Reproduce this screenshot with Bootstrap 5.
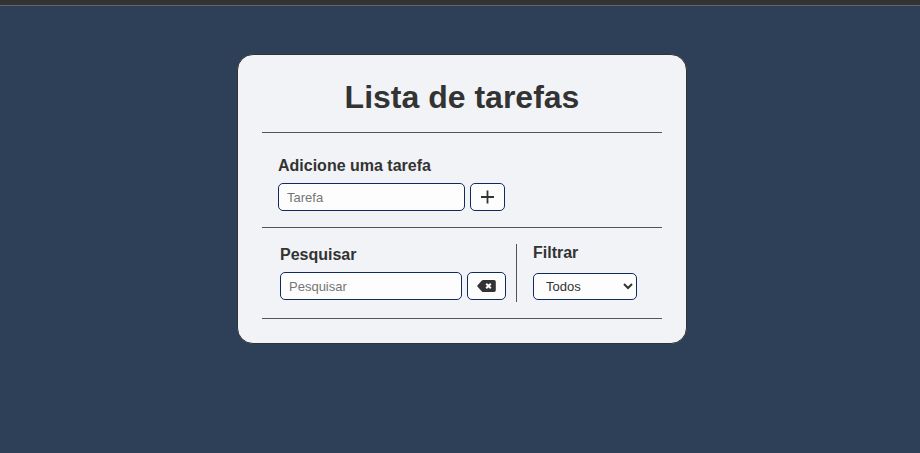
<!DOCTYPE html>
<html lang="pt-BR">
<head>
<meta charset="utf-8">
<meta name="viewport" content="width=device-width, initial-scale=1">
<title>Lista de tarefas</title>
<link rel="stylesheet" href="https://cdn.jsdelivr.net/npm/bootstrap@5.3.0/dist/css/bootstrap.min.css">
<style>
body { font-family: "Liberation Sans", Arial, sans-serif; background: #2e4057; color: #333; }
.top-strip { height: 6px; background: #333; border-bottom: 1px solid #666; }
.page-main { padding: 48px 12px 48px 16px; }
.todo-card { max-width: 450px; background: #f1f3f7; border: 1px solid #333; border-radius: 16px; }
.todo-card h1 { font-size: 32px; line-height: 37px; }
.todo-card header, .todo-card section { border-bottom: 1px solid #555; }
.todo-card label { font-size: 16px; line-height: 18px; }
.field { height: 28px; padding: 0 8px; font-size: 13px; color: #333; background: #fdfdfd; border: 1px solid #102a5e; border-radius: 5px; }
.field::placeholder { color: #757575; }
.form-gap { gap: 5px; }
.add-input { width: 187px; }
.search-input { width: 182px; }
.add-btn { width: 35px; padding: 0; }
.clear-btn { width: 39px; padding: 0; }
.search-form { padding: 2px 10px 2px 2px; border-right: 1px solid #555; }
.filter-group { padding-bottom: 2px; }
.filter-select { width: 104px; height: 27px; }
</style>
<script src="https://cdn.jsdelivr.net/npm/bootstrap@5.3.0/dist/js/bootstrap.bundle.min.js" defer></script>
</head>
<body>
<div class="top-strip"></div>
<main class="page-main">
  <div class="todo-card mx-auto p-4">
    <header class="text-center pb-3">
      <h1 class="fw-bold mb-0">Lista de tarefas</h1>
    </header>
    <section class="px-3 pb-3 pt-4">
      <form>
        <label for="task" class="d-block fw-bold mb-2">Adicione uma tarefa</label>
        <div class="d-flex form-gap">
          <input id="task" type="text" class="field add-input" placeholder="Tarefa">
          <button type="button" class="field add-btn d-flex align-items-center justify-content-center" aria-label="Adicionar">
            <svg width="13" height="14" viewBox="0 0 13 14" fill="none" stroke="#333" stroke-width="1.800" aria-hidden="true"><path d="M6.500 .5v13M0 7h13"/></svg>
          </button>
        </div>
      </form>
    </section>
    <section class="d-flex p-3">
      <form class="search-form">
        <label for="search" class="d-block fw-bold mb-2">Pesquisar</label>
        <div class="d-flex form-gap">
          <input id="search" type="text" class="field search-input" placeholder="Pesquisar">
          <button type="button" class="field clear-btn d-flex align-items-center justify-content-center" aria-label="Limpar">
            <svg width="19" height="14" viewBox="0 0 19 14" aria-hidden="true"><path fill="#333" d="M6.300 1H17a1.800 1.800 0 0 1 1.800 1.800v8.400A1.800 1.800 0 0 1 17 13H6.300a2 2 0 0 1-1.400-.6L.6 7.700a1 1 0 0 1 0-1.400l4.300-4.700A2 2 0 0 1 6.300 1z"/><path d="M9.200 4.700l4.600 4.600M13.800 4.700L9.200 9.300" stroke="#fff" stroke-width="2"/></svg>
          </button>
        </div>
      </form>
      <div class="filter-group ps-3 d-flex flex-column justify-content-between">
        <label for="filter" class="fw-bold">Filtrar</label>
        <select id="filter" class="field filter-select">
          <option>Todos</option>
          <option>Feitos</option>
          <option>A fazer</option>
        </select>
      </div>
    </section>
  </div>
</main>
</body>
</html>
